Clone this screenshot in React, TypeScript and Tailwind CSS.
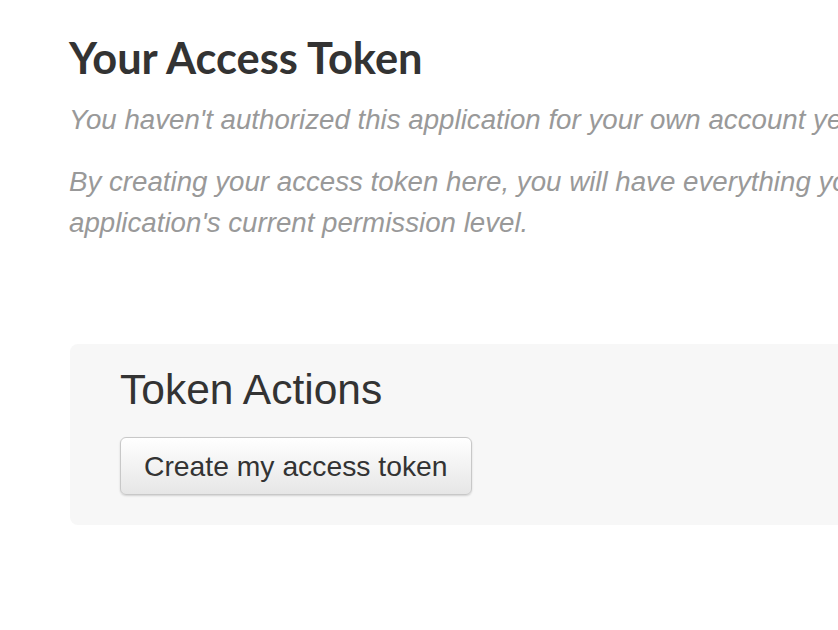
import React from "react";

export default function App() {
  return (
    <div className="w-[838px] h-[630px] overflow-hidden bg-white">
      <div className="w-[1500px] pl-[69px] pt-[28px]">
        <h1 className="text-[43.4px] leading-[58px] font-bold text-[#333333] [font-family:Lato,'Open_Sans',sans-serif]">
          Your Access Token
        </h1>
        <div className="mt-[13px] text-[27.7px] leading-[41px] italic text-[#999999] [font-family:'Liberation_Sans',Arial,sans-serif] whitespace-nowrap">
          <p>You haven't authorized this application for your own account yet.</p>
          <p className="mt-[21px]">
            By creating your access token here, you will have everything you need to make API calls right away. The access token generated will reflect your
            <br />
            application's current permission level.
          </p>
        </div>
        <div className="mt-[101px] ml-[1px] w-[1200px] h-[181px] rounded-[8px] bg-[#f7f7f7] pl-[50px] pt-[20px] [font-family:'Liberation_Sans',Arial,sans-serif]">
          <h2 className="text-[42.5px] leading-[52px] text-[#333333]">Token Actions</h2>
          <button className="mt-[21px] h-[58px] px-[23px] rounded-[6px] border border-[#c8c8c8] bg-gradient-to-b from-[#ffffff] to-[#e6e6e6] shadow-[0_1px_2px_rgba(0,0,0,0.15)] text-[28.3px] text-[#333333]">
            Create my access token
          </button>
        </div>
      </div>
    </div>
  );
}
